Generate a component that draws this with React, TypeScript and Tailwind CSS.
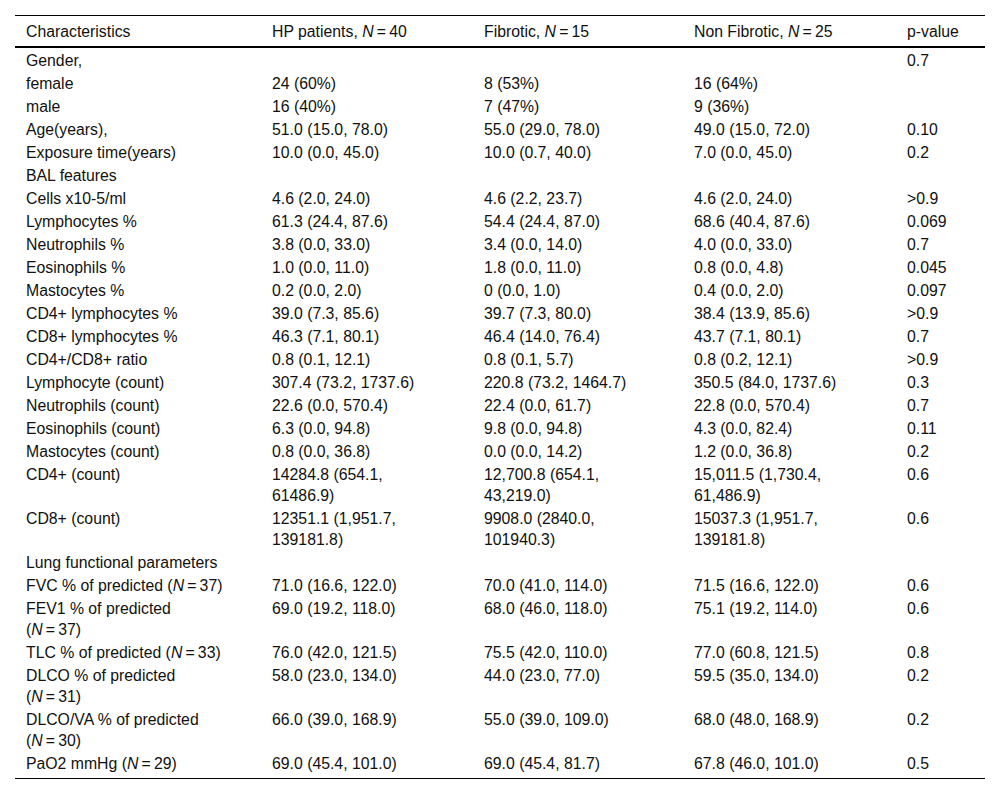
import React from 'react';

type Cell = React.ReactNode;

const N = ({ n }: { n: number }) => (
    <>
        <i>N</i>
        {'\u2009=\u2009'}
        {n}
    </>
);

const header: Cell[] = [
    'Characteristics',
    <>HP patients, <N n={40} /></>,
    <>Fibrotic, <N n={15} /></>,
    <>Non Fibrotic, <N n={25} /></>,
    'p-value',
];

const rows: Cell[][] = [
    ['Gender,', '', '', '', '0.7'],
    ['female', '24 (60%)', '8 (53%)', '16 (64%)', ''],
    ['male', '16 (40%)', '7 (47%)', '9 (36%)', ''],
    ['Age(years),', '51.0 (15.0, 78.0)', '55.0 (29.0, 78.0)', '49.0 (15.0, 72.0)', '0.10'],
    ['Exposure time(years)', '10.0 (0.0, 45.0)', '10.0 (0.7, 40.0)', '7.0 (0.0, 45.0)', '0.2'],
    ['BAL features', '', '', '', ''],
    ['Cells x10-5/ml', '4.6 (2.0, 24.0)', '4.6 (2.2, 23.7)', '4.6 (2.0, 24.0)', '>0.9'],
    ['Lymphocytes %', '61.3 (24.4, 87.6)', '54.4 (24.4, 87.0)', '68.6 (40.4, 87.6)', '0.069'],
    ['Neutrophils %', '3.8 (0.0, 33.0)', '3.4 (0.0, 14.0)', '4.0 (0.0, 33.0)', '0.7'],
    ['Eosinophils %', '1.0 (0.0, 11.0)', '1.8 (0.0, 11.0)', '0.8 (0.0, 4.8)', '0.045'],
    ['Mastocytes %', '0.2 (0.0, 2.0)', '0 (0.0, 1.0)', '0.4 (0.0, 2.0)', '0.097'],
    ['CD4+ lymphocytes %', '39.0 (7.3, 85.6)', '39.7 (7.3, 80.0)', '38.4 (13.9, 85.6)', '>0.9'],
    ['CD8+ lymphocytes %', '46.3 (7.1, 80.1)', '46.4 (14.0, 76.4)', '43.7 (7.1, 80.1)', '0.7'],
    ['CD4+/CD8+ ratio', '0.8 (0.1, 12.1)', '0.8 (0.1, 5.7)', '0.8 (0.2, 12.1)', '>0.9'],
    ['Lymphocyte (count)', '307.4 (73.2, 1737.6)', '220.8 (73.2, 1464.7)', '350.5 (84.0, 1737.6)', '0.3'],
    ['Neutrophils (count)', '22.6 (0.0, 570.4)', '22.4 (0.0, 61.7)', '22.8 (0.0, 570.4)', '0.7'],
    ['Eosinophils (count)', '6.3 (0.0, 94.8)', '9.8 (0.0, 94.8)', '4.3 (0.0, 82.4)', '0.11'],
    ['Mastocytes (count)', '0.8 (0.0, 36.8)', '0.0 (0.0, 14.2)', '1.2 (0.0, 36.8)', '0.2'],
    [
        'CD4+ (count)',
        <>14284.8 (654.1,<br />61486.9)</>,
        <>12,700.8 (654.1,<br />43,219.0)</>,
        <>15,011.5 (1,730.4,<br />61,486.9)</>,
        '0.6',
    ],
    [
        'CD8+ (count)',
        <>12351.1 (1,951.7,<br />139181.8)</>,
        <>9908.0 (2840.0,<br />101940.3)</>,
        <>15037.3 (1,951.7,<br />139181.8)</>,
        '0.6',
    ],
    ['Lung functional parameters', '', '', '', ''],
    [<>FVC % of predicted (<N n={37} />)</>, '71.0 (16.6, 122.0)', '70.0 (41.0, 114.0)', '71.5 (16.6, 122.0)', '0.6'],
    [<>FEV1 % of predicted<br />(<N n={37} />)</>, '69.0 (19.2, 118.0)', '68.0 (46.0, 118.0)', '75.1 (19.2, 114.0)', '0.6'],
    [<>TLC % of predicted (<N n={33} />)</>, '76.0 (42.0, 121.5)', '75.5 (42.0, 110.0)', '77.0 (60.8, 121.5)', '0.8'],
    [<>DLCO % of predicted<br />(<N n={31} />)</>, '58.0 (23.0, 134.0)', '44.0 (23.0, 77.0)', '59.5 (35.0, 134.0)', '0.2'],
    [<>DLCO/VA % of predicted<br />(<N n={30} />)</>, '66.0 (39.0, 168.9)', '55.0 (39.0, 109.0)', '68.0 (48.0, 168.9)', '0.2'],
    [<>PaO2 mmHg (<N n={29} />)</>, '69.0 (45.4, 101.0)', '69.0 (45.4, 81.7)', '67.8 (46.0, 101.0)', '0.5'],
];

export default function App() {
    return (
        <div className="w-[1000px] h-[796px] bg-white pt-[15px] pl-[15px] text-[15.8px] leading-[21px] text-[#111] font-['Liberation_Sans',Arial,sans-serif]">
            <table className="w-[970px] table-fixed border-separate border-spacing-0">
                <colgroup>
                    <col className="w-[246px]" />
                    <col className="w-[212px]" />
                    <col className="w-[210px]" />
                    <col className="w-[213px]" />
                    <col className="w-[89px]" />
                </colgroup>
                <thead>
                    <tr>
                        {header.map((h, i) => (
                            <th
                                key={i}
                                className="text-left font-normal align-top whitespace-nowrap pl-[11px] pt-[5px] pb-[4px] border-t border-b-2 border-black"
                            >
                                {h}
                            </th>
                        ))}
                    </tr>
                </thead>
                <tbody>
                    {rows.map((row, r) => {
                        const first = r === 0;
                        const last = r === rows.length - 1;
                        return (
                            <tr key={r}>
                                {row.map((c, i) => (
                                    <td
                                        key={i}
                                        className={
                                            'align-top whitespace-nowrap pl-[11px] ' +
                                            (first ? 'pt-[2px] ' : 'pt-px ') +
                                            (last ? 'pb-[4px] border-b border-black' : 'pb-px')
                                        }
                                    >
                                        {c}
                                    </td>
                                ))}
                            </tr>
                        );
                    })}
                </tbody>
            </table>
        </div>
    );
}
